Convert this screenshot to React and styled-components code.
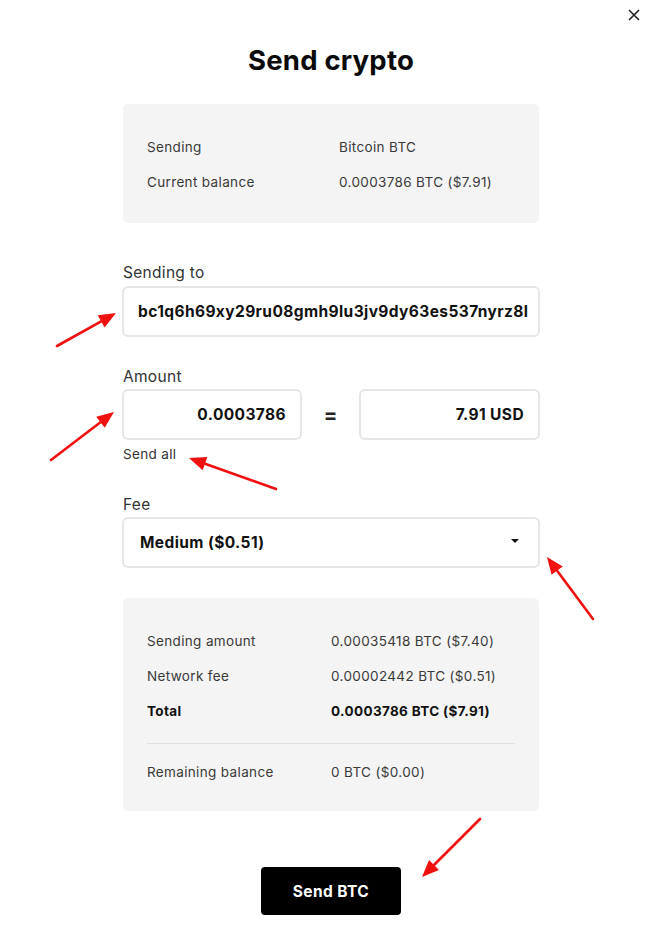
import React from "react";
import styled, { createGlobalStyle } from "styled-components";

const Global = createGlobalStyle`
  html, body { margin: 0; padding: 0; background: #fff; }
  body { font-family: Inter, "Liberation Sans", sans-serif; color: #111; }
  * { box-sizing: border-box; }
`;

const Page = styled.div`
  position: relative;
  width: 662px;
  min-height: 929px;
  display: flex;
  flex-direction: column;
  align-items: center;
  padding-top: 44px;
`;

const Close = styled.button`
  position: absolute;
  top: 7px;
  right: 20px;
  width: 16px;
  height: 16px;
  padding: 0;
  border: 0;
  background: none;
  display: flex;
  align-items: center;
  justify-content: center;
`;

const Title = styled.h1`
  margin: 0;
  font-size: 27.5px;
  line-height: 32px;
  font-weight: 700;
  color: #0a0a0a;
  letter-spacing: 0.2px;
`;

const Column = styled.div`
  width: 416px;
  display: flex;
  flex-direction: column;
`;

const InfoBox = styled.div`
  background: #f4f4f4;
  border-radius: 5px;
  padding: ${(p) => p.$pad};
  margin-top: ${(p) => p.$top}px;
  display: flex;
  flex-direction: column;
  gap: 15px;
`;

const Row = styled.div`
  display: grid;
  grid-template-columns: ${(p) => p.$labelWidth}px 1fr;
  font-size: 13.5px;
  letter-spacing: 0.35px;
  line-height: 20px;
  color: ${(p) => (p.$bold ? "#111" : "#3a3a3a")};
  font-weight: ${(p) => (p.$bold ? 700 : 400)};
`;

const Divider = styled.div`
  height: 1px;
  background: #e2e2e2;
  margin: 7px 0 3px;
`;

const Label = styled.div`
  margin-top: ${(p) => p.$top}px;
  font-size: 15.5px;
  letter-spacing: 0.3px;
  line-height: 20px;
  color: #333;
`;

const Field = styled.div`
  margin: ${(p) => p.$top || 0}px -1px 0;
  height: 51px;
  border: 2px solid #e6e6e6;
  border-radius: 6px;
  background: #fff;
  display: flex;
  align-items: center;
  justify-content: ${(p) => (p.$right ? "flex-end" : "space-between")};
  padding: 0 ${(p) => (p.$right ? 14 : 19)}px 0 ${(p) => p.$left || 13}px;
  font-size: 15.5px;
  letter-spacing: 0.4px;
  font-weight: 700;
  color: #111;
  overflow: hidden;
  white-space: nowrap;
`;

const AmountGrid = styled.div`
  margin: 2px -1px 0;
  display: grid;
  grid-template-columns: 180px 1fr 181px;
  align-items: center;
`;

const AmountField = styled(Field)`
  margin: 0;
`;

const Equals = styled.div`
  text-align: center;
  font-size: 20px;
  font-weight: 700;
  color: #222;
`;

const SendAll = styled.div`
  margin-top: 4px;
  font-size: 13.5px;
  letter-spacing: 0.35px;
  line-height: 20px;
  color: #333;
`;

const Caret = styled.span`
  width: 0;
  height: 0;
  border-left: 4px solid transparent;
  border-right: 4px solid transparent;
  border-top: 4px solid #111;
  margin-top: -3px;
`;

const Button = styled.button`
  margin-top: 56px;
  width: 140px;
  height: 48px;
  border: 0;
  border-radius: 4px;
  background: #000;
  color: #fff;
  font-family: Inter, "Liberation Sans", sans-serif;
  font-size: 15.5px;
  letter-spacing: 0.4px;
  font-weight: 700;
`;

const Overlay = styled.svg`
  position: absolute;
  inset: 0;
  pointer-events: none;
`;

const arrows = [
  [57, 346, 116, 313],
  [51, 460, 114, 412],
  [276, 489, 189, 458],
  [593, 619, 547, 557],
  [480, 819, 422, 877],
];

function Arrow({ x1, y1, x2, y2 }) {
  const ang = Math.atan2(y2 - y1, x2 - x1);
  const len = 17;
  const w = 7;
  const bx = x2 - Math.cos(ang) * len;
  const by = y2 - Math.sin(ang) * len;
  const px = -Math.sin(ang) * w;
  const py = Math.cos(ang) * w;
  return (
    <g>
      <line x1={x1} y1={y1} x2={bx} y2={by} stroke="#f01010" strokeWidth="2.6" strokeLinecap="round" />
      <polygon points={`${x2},${y2} ${bx + px},${by + py} ${bx - px},${by - py}`} fill="#f01010" />
    </g>
  );
}

export default function App() {
  return (
    <>
      <Global />
      <Page>
        <Close aria-label="Close">
          <svg width="12" height="12" viewBox="0 0 12 12">
            <path d="M1 1L11 11M11 1L1 11" stroke="#222" strokeWidth="1.6" />
          </svg>
        </Close>
        <Title>Send crypto</Title>
        <Column>
          <InfoBox $top={28} $pad="33px 24px 31px">
            <Row $labelWidth={192}>
              <span>Sending</span>
              <span>Bitcoin BTC</span>
            </Row>
            <Row $labelWidth={192}>
              <span>Current balance</span>
              <span>0.0003786 BTC ($7.91)</span>
            </Row>
          </InfoBox>

          <Label $top={40}>Sending to</Label>
          <Field $top={3} $left={14}>bc1q6h69xy29ru08gmh9lu3jv9dy63es537nyrz8l</Field>

          <Label $top={30}>Amount</Label>
          <AmountGrid>
            <AmountField $right>0.0003786</AmountField>
            <Equals>=</Equals>
            <AmountField $right>7.91 USD</AmountField>
          </AmountGrid>
          <SendAll>Send all</SendAll>

          <Label $top={31}>Fee</Label>
          <Field $top={2} $left={16}>
            <span>Medium ($0.51)</span>
            <Caret />
          </Field>

          <InfoBox $top={30} $pad="33px 24px 29px">
            <Row $labelWidth={184}>
              <span>Sending amount</span>
              <span>0.00035418 BTC ($7.40)</span>
            </Row>
            <Row $labelWidth={184}>
              <span>Network fee</span>
              <span>0.00002442 BTC ($0.51)</span>
            </Row>
            <Row $labelWidth={184} $bold>
              <span>Total</span>
              <span>0.0003786 BTC ($7.91)</span>
            </Row>
            <Divider />
            <Row $labelWidth={184}>
              <span>Remaining balance</span>
              <span>0 BTC ($0.00)</span>
            </Row>
          </InfoBox>
        </Column>
        <Button>Send BTC</Button>
        <Overlay width="662" height="929" viewBox="0 0 662 929">
          {arrows.map(([x1, y1, x2, y2], i) => (
            <Arrow key={i} x1={x1} y1={y1} x2={x2} y2={y2} />
          ))}
        </Overlay>
      </Page>
    </>
  );
}
